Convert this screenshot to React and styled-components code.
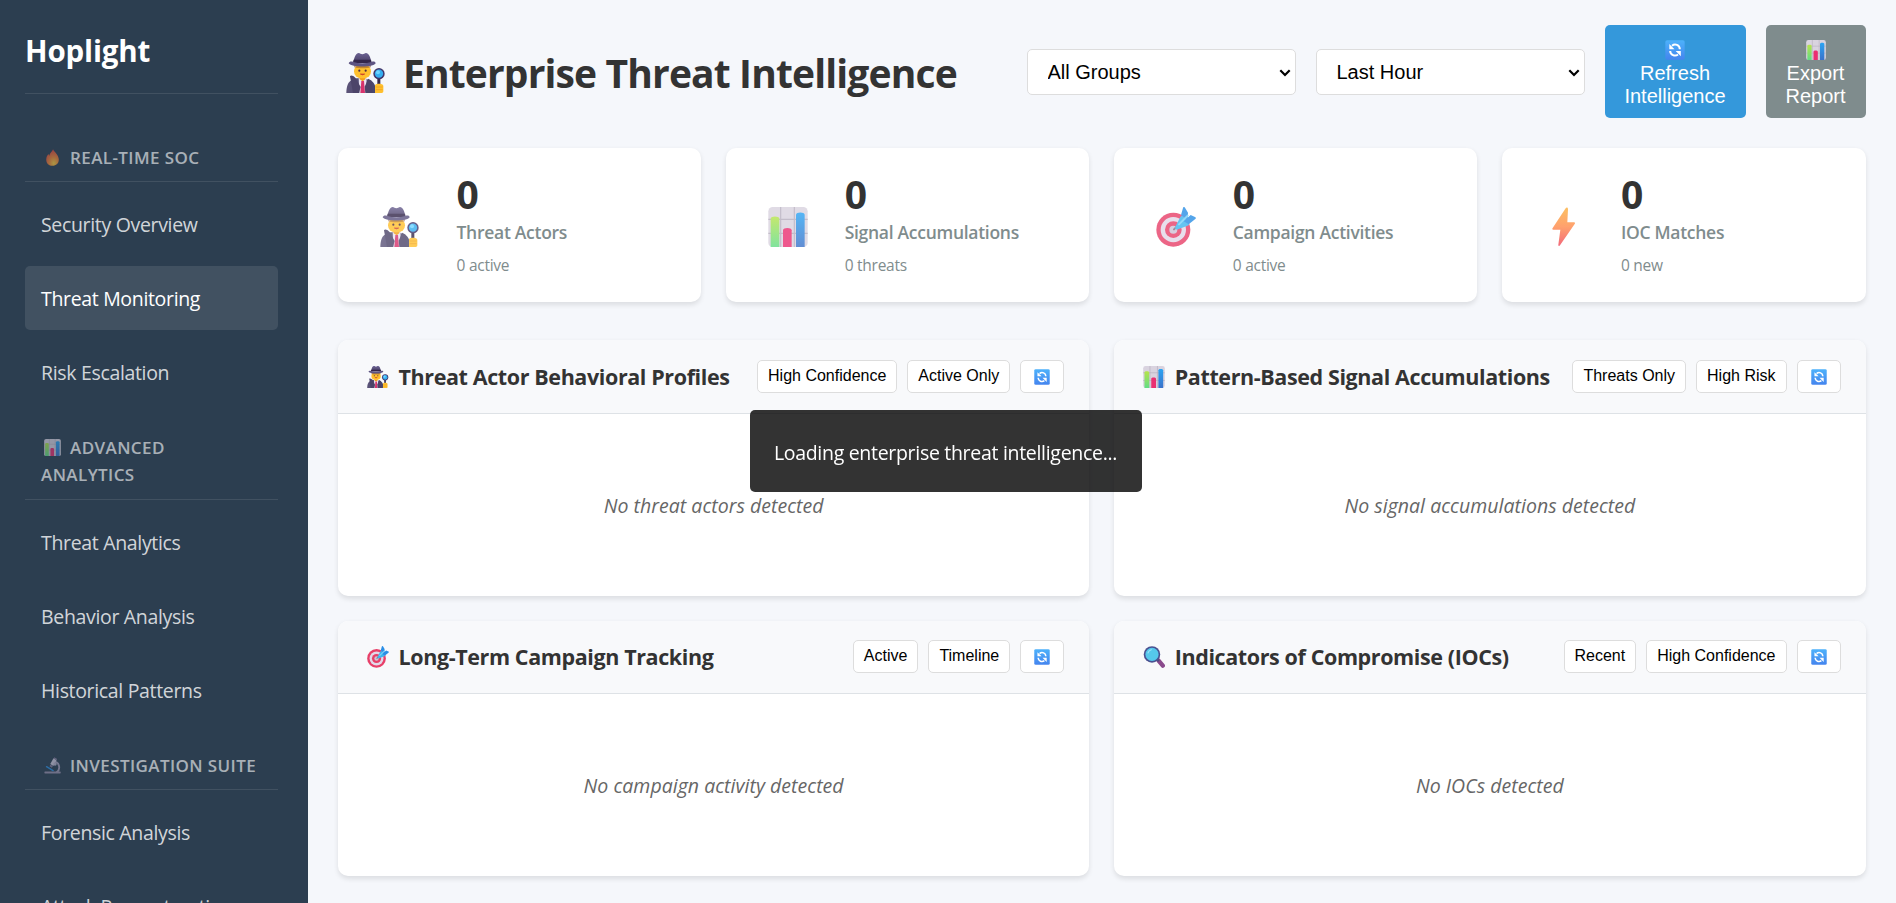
import React, { useId } from "react";
import styled, { createGlobalStyle } from "styled-components";

const GlobalStyle = createGlobalStyle`
  * { box-sizing: border-box; }
  body {
    margin: 0;
    font-family: "Open Sans", "Noto Sans", sans-serif;
    font-size: 19.5px;
    letter-spacing: -0.36px;
    color: #333;
    background: #f5f7fb;
    overflow: hidden;
  }
  h1, h2, h3, p, ul { margin: 0; padding: 0; }
  button, select { font-family: "Liberation Sans", Arial, sans-serif; letter-spacing: 0; }
`;

/* ---------- emoji drawings ---------- */

const Svg = styled.svg`
  display: block;
  flex: none;
  width: ${(p) => p.$size}px;
  height: ${(p) => p.$size}px;
`;

function Detective({ id }) {
  return (
    <>
      <defs>
        <linearGradient id={id + "h"} x1="0" y1="0" x2="0" y2="1">
          <stop offset="0" stopColor="#6b6293" />
          <stop offset="1" stopColor="#4a4066" />
        </linearGradient>
        <linearGradient id={id + "c"} x1="0" y1="0" x2="1" y2="0">
          <stop offset="0" stopColor="#5b5378" />
          <stop offset="1" stopColor="#48466d" />
        </linearGradient>
      </defs>
      <path d="M0 120c0-14 3-30 12-36l16-8h28l19 8c11 6 14 20 14 36z" fill={`url(#${id}c)`} />
      <path d="M37 76h24l-2 44H39z" fill="#e9e3f2" />
      <path d="M45 84h8l3 36H42z" fill="#d6336c" />
      <path d="M40 66h17v13l-8 6-9-6z" fill="#f59f1b" />
      <rect x="23" y="34" width="51" height="42" rx="21" fill="#ffc02e" />
      <path d="M23 36h51v7c-14 4-36 4-51 0z" fill="#8a4b28" opacity=".5" />
      <circle cx="39" cy="53" r="3.2" fill="#4d2b3d" />
      <circle cx="58" cy="53" r="3.2" fill="#4d2b3d" />
      <path d="M42 63q7 5 13 0z" fill="#c7362c" stroke="#c7362c" strokeWidth="2" />
      <path d="M11 70c2-4 9-3 16 4l16 28-5 18H20z" fill="#4c4469" />
      <path d="M66 77l10 6 3 37H57l-2-19z" fill="#4c4469" />
      <path d="M21 27C25 11 29 0 37 0c4 0 7 4 11 4s7-4 11-4c8 0 13 11 16 27z" fill={`url(#${id}h)`} />
      <path d="M22 20h52l2 10H20z" fill="#33264b" />
      <path d="M7 31c2-6 8-6 14-4 17 5 37 5 54 0 6-2 12-2 13 4-7 13-72 13-81 0z" fill="#5d5482" />
      <rect x="93" y="74" width="9" height="24" rx="3" fill="#35294a" />
      <circle cx="98" cy="62" r="17" fill="#40356a" />
      <circle cx="98" cy="62" r="12.500" fill="#35aef0" />
      <circle cx="95" cy="58" r="6" fill="#70d5ff" />
      <path d="M86 99c0-7 6-5 9-7 9 0 16 1 16 7v16c0 4-2 5-5 5H86z" fill="#ffc02e" />
      <path d="M88 102h21M88 110h21" stroke="#ef9b1d" strokeWidth="2" />
    </>
  );
}

function Chart({ id }) {
  return (
    <>
      <defs>
        <linearGradient id={id + "g"} x1="0" y1="0" x2="0" y2="1">
          <stop offset="0" stopColor="#b7e34b" />
          <stop offset="1" stopColor="#62dd86" />
        </linearGradient>
        <linearGradient id={id + "b"} x1="0" y1="0" x2="0" y2="1">
          <stop offset="0" stopColor="#2ba4f3" />
          <stop offset="1" stopColor="#3b72c9" />
        </linearGradient>
      </defs>
      <rect width="118" height="120" rx="13" fill="#d9d3df" />
      <path d="M37 0v120M78 0v120M0 37h118M0 79h118" stroke="#b5adbd" strokeWidth="3.5" />
      <path d="M7 120V35c0-9 26-9 26 0v85z" fill={`url(#${id}g)`} />
      <path d="M44 120V70c0-9 26-9 26 0v50z" fill="#ea2f71" />
      <path d="M83 120V23c0-9 26-9 26 0v97z" fill={`url(#${id}b)`} />
    </>
  );
}

function Target() {
  return (
    <>
      <circle cx="51" cy="68" r="51" fill="#e83f68" />
      <circle cx="51" cy="68" r="38" fill="#e3d8e8" />
      <circle cx="51" cy="68" r="25" fill="#e83f68" />
      <circle cx="51" cy="68" r="12" fill="#cfc3d6" />
      <path d="M53 67l22-22" stroke="#7d7386" strokeWidth="6" strokeLinecap="round" />
      <path d="M57 59l14-27c2-5 5-6 9-4l13 10 5 9c2 4 0 7-4 9L65 67c-6 2-10-2-8-8z" fill="#3fb6ee" />
      <path d="M74 24L80 3c1-4 4-4 6-1l9 15-1 22zM82 43l21-19 13 6c4 2 3 5 0 7L97 52z" fill="#2a8fe6" />
      <path d="M68 52l26-26" stroke="#75d2fa" strokeWidth="6" strokeLinecap="round" />
    </>
  );
}

function Bolt({ id }) {
  return (
    <>
      <defs>
        <linearGradient id={id + "z"} x1="0" y1="0" x2="0" y2="1">
          <stop offset="0" stopColor="#fcb03c" />
          <stop offset=".5" stopColor="#ff8a4a" />
          <stop offset="1" stopColor="#f0455a" />
        </linearGradient>
      </defs>
      <path d="M64 4L25 63c-2 3-1 5 2 5h21l-6 45c-1 4 3 5 5 2l44-64c2-3 1-5-2-5H69l2-39c0-5-4-7-7-3z" fill={`url(#${id}z)`} />
    </>
  );
}

function Magnifier() {
  return (
    <>
      <path d="M84 80l23 27" stroke="#8a4a8c" strokeWidth="24" strokeLinecap="round" />
      <path d="M70 66l15 17" stroke="#4c4a7c" strokeWidth="12" />
      <circle cx="48" cy="46" r="45" fill="#4a5191" />
      <circle cx="48" cy="46" r="36" fill="#55c8ec" />
      <path d="M26 38c3-9 9-15 18-18" stroke="#9be4f8" strokeWidth="6" fill="none" strokeLinecap="round" />
    </>
  );
}

function Refresh({ id }) {
  return (
    <>
      <defs>
        <linearGradient id={id + "r"} x1="0" y1="0" x2="0" y2="1">
          <stop offset="0" stopColor="#4db2fb" />
          <stop offset="1" stopColor="#4484ee" />
        </linearGradient>
      </defs>
      <rect x="1" y="1" width="116" height="118" rx="11" fill={`url(#${id}r)`} />
      <path d="M41 34c18-15 46-5 47 21" stroke="#fff" strokeWidth="12" fill="none" />
      <path d="M25 24v31h31z" fill="#fff" />
      <path d="M77 87c-18 14-46 4-47-21" stroke="#fff" strokeWidth="12" fill="none" />
      <path d="M94 97V66H63z" fill="#fff" />
    </>
  );
}

function Fire({ id }) {
  return (
    <>
      <defs>
        <radialGradient id={id + "f"} cx=".6" cy=".85" r=".8">
          <stop offset="0" stopColor="#ffd23c" />
          <stop offset=".45" stopColor="#f98a32" />
          <stop offset="1" stopColor="#e2483d" />
        </radialGradient>
      </defs>
      <path d="M63 2c5 18 35 32 40 66 4 29-15 50-44 50-28 0-46-18-44-47 1-17 9-25 15-35l6 12C38 28 56 22 63 2z" fill={`url(#${id}f)`} />
    </>
  );
}

function Microscope() {
  return (
    <>
      <path d="M62 31c42-3 61 52 25 78" stroke="#a79fb9" strokeWidth="13" fill="none" />
      <path d="M6 102h107c5 0 6 14 0 14H6c-6 0-5-14 0-14z" fill="#9a90ac" />
      <path d="M17 68l46 28" stroke="#2d8fe0" strokeWidth="10" strokeLinecap="round" />
      <path d="M66 9l22 13-23 41-22-13z" fill="#d2cbdd" />
      <path d="M72 2l20 12-5 9-20-12zM44 54l17 10-6 11-17-10z" fill="#857b9c" />
      <circle cx="77" cy="49" r="12" fill="#b9b1c8" />
    </>
  );
}

const drawings = {
  detective: Detective,
  chart: Chart,
  target: Target,
  bolt: Bolt,
  magnifier: Magnifier,
  refresh: Refresh,
  fire: Fire,
  microscope: Microscope,
};

function Emoji({ name, size, className }) {
  const id = useId();
  const Drawing = drawings[name];
  return (
    <Svg $size={size} viewBox="0 0 118 120" className={className} aria-hidden="true">
      <Drawing id={id} />
    </Svg>
  );
}

/* ---------- shell ---------- */

const Shell = styled.div`
  display: flex;
  height: 100vh;
  overflow: hidden;
`;

const Sidebar = styled.aside`
  flex: none;
  width: 308px;
  padding: 28px 30px 0 25px;
  background: #2c3e50;
  color: #fff;
`;

const Brand = styled.h2`
  height: 66px;
  margin-bottom: 40px;
  border-bottom: 1px solid rgba(255, 255, 255, 0.1);
  font-size: 29.5px;
  line-height: 45px;
  font-weight: 700;
  letter-spacing: -0.15px;
`;

const NavSection = styled.section`
  margin-bottom: 20px;
`;

const NavHeading = styled.h3`
  padding: 10px 16px;
  border-bottom: 1px solid rgba(255, 255, 255, 0.1);
  color: rgba(255, 255, 255, 0.6);
  font-size: 17px;
  font-weight: 600;
  line-height: 27.2px;
  letter-spacing: 0.4px;
  text-transform: uppercase;
`;

const NavTitle = styled.span`
  display: block;
  max-width: ${(p) => (p.$wrap ? "180px" : "none")};
`;

const NavEmoji = styled(Emoji)`
  display: inline-block;
  margin: 0 9px 0 3px;
  vertical-align: -2px;
  opacity: 0.6;
`;

const NavList = styled.ul`
  display: flex;
  flex-direction: column;
  gap: 10px;
  margin-top: 10px;
  list-style: none;
`;

const NavItem = styled.li`
  height: 64px;
  padding: 17px 16px 15px;
  border-radius: 5px;
  line-height: 32px;
  white-space: nowrap;
  letter-spacing: -0.33px;
  color: ${(p) => (p.$active ? "#fff" : "rgba(255, 255, 255, 0.8)")};
  background: ${(p) => (p.$active ? "rgba(255, 255, 255, 0.1)" : "transparent")};
`;

const Main = styled.main`
  flex: 1;
  min-width: 0;
  padding: 25px 30.5px 0 30px;
`;

/* ---------- header ---------- */

const PageHeader = styled.header`
  display: flex;
  align-items: center;
  justify-content: space-between;
  height: 93px;
  margin-bottom: 30px;
`;

const PageTitle = styled.h1`
  display: flex;
  align-items: center;
  gap: 17px;
  padding: 3px 0 0 8px;
  font-size: 39px;
  font-weight: 700;
  line-height: 50px;
  letter-spacing: -0.86px;
  white-space: nowrap;
`;

const Controls = styled.div`
  display: flex;
  align-items: center;
  gap: 20px;
`;

const SelectBox = styled.div`
  display: grid;
  align-items: center;
  width: 269px;
  height: 46px;

  > * { grid-area: 1 / 1; }
`;

const Select = styled.select`
  width: 100%;
  height: 100%;
  padding: 0 20px;
  appearance: none;
  border: 1px solid #ddd;
  border-radius: 5px;
  background: #fff;
  color: #000;
  font-size: 20px;
`;

const Chevron = styled.svg`
  justify-self: end;
  width: 12px;
  height: 8px;
  margin: 2px 5px 0 0;
  pointer-events: none;
`;

const ActionButton = styled.button`
  display: flex;
  flex-direction: column;
  align-items: center;
  width: ${(p) => p.$width}px;
  height: 93px;
  padding: 15px 0 0;
  border: 0;
  border-radius: 5px;
  background: ${(p) => p.$color};
  color: #fff;
  font-size: 20px;
  line-height: 23px;
`;

const ActionLabel = styled.span`
  width: min-content;
  margin-top: 2px;
`;

/* ---------- stat cards ---------- */

const StatGrid = styled.section`
  display: grid;
  grid-template-columns: repeat(4, 1fr);
  gap: 25px;
  margin-bottom: 38.4px;
`;

const StatCard = styled.article`
  display: flex;
  height: 154px;
  padding: 26px 25px 0 42px;
  border-radius: 10px;
  background: #fff;
  box-shadow: 0 2.5px 5px rgba(0, 0, 0, 0.1);
`;

const StatEmoji = styled(Emoji)`
  margin: 33px 36.5px 0 0;
  opacity: 0.8;
`;

const StatValue = styled.div`
  font-size: 39px;
  font-weight: 700;
  line-height: 40px;
`;

const StatLabel = styled.div`
  margin-top: 4px;
  color: #7f8c8d;
  font-size: 17.5px;
  font-weight: 600;
  line-height: 28px;
  letter-spacing: -0.28px;
`;

const StatNote = styled.div`
  margin-top: 7px;
  color: #7f8c8d;
  font-size: 15.5px;
  line-height: 24px;
  letter-spacing: -0.25px;
`;

/* ---------- panels ---------- */

const PanelGrid = styled.section`
  display: grid;
  grid-template-columns: repeat(2, 1fr);
  gap: 25px;
`;

const Panel = styled.article`
  display: flex;
  flex-direction: column;
  height: 255.2px;
  overflow: hidden;
  border-radius: 10px;
  background: #fff;
  box-shadow: 0 2.5px 5px rgba(0, 0, 0, 0.1);
`;

const PanelHeader = styled.header`
  display: flex;
  align-items: center;
  justify-content: space-between;
  height: 73.6px;
  padding: 0 25px 0 29px;
  border-bottom: 1px solid #dee2e6;
  background: #f8f9fb;
`;

const PanelTitle = styled.h3`
  display: flex;
  align-items: center;
  gap: 9.5px;
  font-size: 21.5px;
  font-weight: 700;
  line-height: 30px;
  letter-spacing: -0.39px;
  white-space: nowrap;
`;

const PanelActions = styled.div`
  display: flex;
  gap: 10px;
`;

const ChipButton = styled.button`
  display: grid;
  place-items: center;
  min-width: 44px;
  height: 33px;
  padding: 0 10px 1px;
  border: 1px solid #ddd;
  border-radius: 5px;
  background: #fff;
  color: #000;
  font-size: 16px;
`;

const ChipEmoji = styled(Emoji)`
  margin-top: 2px;
`;

const EmptyState = styled.p`
  flex: 1;
  display: grid;
  place-items: center;
  padding-top: 1px;
  color: #666;
  font-style: italic;
  letter-spacing: 0.03px;
`;

const LoadingToast = styled.div`
  position: fixed;
  top: 410px;
  left: calc(50% - 198.5px);
  display: grid;
  place-items: center;
  width: 392px;
  height: 82px;
  padding-top: 2px;
  border-radius: 5px;
  background: rgba(0, 0, 0, 0.8);
  color: #fff;
  letter-spacing: -0.3px;
  white-space: nowrap;
`;

const navigation = [
  { icon: "fire", title: "Real-Time SOC", items: ["Security Overview", "Threat Monitoring", "Risk Escalation"] },
  { icon: "chart", title: "Advanced Analytics", wrap: true, items: ["Threat Analytics", "Behavior Analysis", "Historical Patterns"] },
  { icon: "microscope", title: "Investigation Suite", items: ["Forensic Analysis", "Attack Reconstruction"] },
];

const stats = [
  { icon: "detective", label: "Threat Actors", note: "0 active" },
  { icon: "chart", label: "Signal Accumulations", note: "0 threats" },
  { icon: "target", label: "Campaign Activities", note: "0 active" },
  { icon: "bolt", label: "IOC Matches", note: "0 new" },
];

const panels = [
  { icon: "detective", title: "Threat Actor Behavioral Profiles", filters: ["High Confidence", "Active Only"], empty: "No threat actors detected" },
  { icon: "chart", title: "Pattern-Based Signal Accumulations", filters: ["Threats Only", "High Risk"], empty: "No signal accumulations detected" },
  { icon: "target", title: "Long-Term Campaign Tracking", filters: ["Active", "Timeline"], empty: "No campaign activity detected" },
  { icon: "magnifier", title: "Indicators of Compromise (IOCs)", filters: ["Recent", "High Confidence"], empty: "No IOCs detected" },
];

function Dropdown({ value }) {
  return (
    <SelectBox>
      <Select defaultValue={value}>
        <option>{value}</option>
      </Select>
      <Chevron viewBox="0 0 12 8">
        <path d="M1.3 1.3L6 6l4.7-4.7" fill="none" stroke="#000" strokeWidth="2.2" />
      </Chevron>
    </SelectBox>
  );
}

export default function App() {
  return (
    <>
      <GlobalStyle />
      <Shell>
        <Sidebar>
          <Brand>Hoplight</Brand>
          {navigation.map((group) => (
            <NavSection key={group.title}>
              <NavHeading>
                <NavTitle $wrap={group.wrap}>
                  <NavEmoji name={group.icon} size={17} />
                  {group.title}
                </NavTitle>
              </NavHeading>
              <NavList>
                {group.items.map((item) => (
                  <NavItem key={item} $active={item === "Threat Monitoring"}>
                    {item}
                  </NavItem>
                ))}
              </NavList>
            </NavSection>
          ))}
        </Sidebar>
        <Main>
          <PageHeader>
            <PageTitle>
              <Emoji name="detective" size={40} />
              Enterprise Threat Intelligence
            </PageTitle>
            <Controls>
              <Dropdown value="All Groups" />
              <Dropdown value="Last Hour" />
              <ActionButton $width={141} $color="#3498db">
                <Emoji name="refresh" size={20} />
                <ActionLabel>Refresh Intelligence</ActionLabel>
              </ActionButton>
              <ActionButton $width={100} $color="#7f8c8d">
                <Emoji name="chart" size={20} />
                <ActionLabel>Export Report</ActionLabel>
              </ActionButton>
            </Controls>
          </PageHeader>
          <StatGrid>
            {stats.map((stat) => (
              <StatCard key={stat.label}>
                <StatEmoji name={stat.icon} size={40} />
                <div>
                  <StatValue>0</StatValue>
                  <StatLabel>{stat.label}</StatLabel>
                  <StatNote>{stat.note}</StatNote>
                </div>
              </StatCard>
            ))}
          </StatGrid>
          <PanelGrid>
            {panels.map((panel) => (
              <Panel key={panel.title}>
                <PanelHeader>
                  <PanelTitle>
                    <Emoji name={panel.icon} size={22} />
                    {panel.title}
                  </PanelTitle>
                  <PanelActions>
                    {panel.filters.map((filter) => (
                      <ChipButton key={filter}>{filter}</ChipButton>
                    ))}
                    <ChipButton aria-label="Refresh">
                      <ChipEmoji name="refresh" size={16} />
                    </ChipButton>
                  </PanelActions>
                </PanelHeader>
                <EmptyState>{panel.empty}</EmptyState>
              </Panel>
            ))}
          </PanelGrid>
        </Main>
      </Shell>
      <LoadingToast>Loading enterprise threat intelligence...</LoadingToast>
    </>
  );
}
